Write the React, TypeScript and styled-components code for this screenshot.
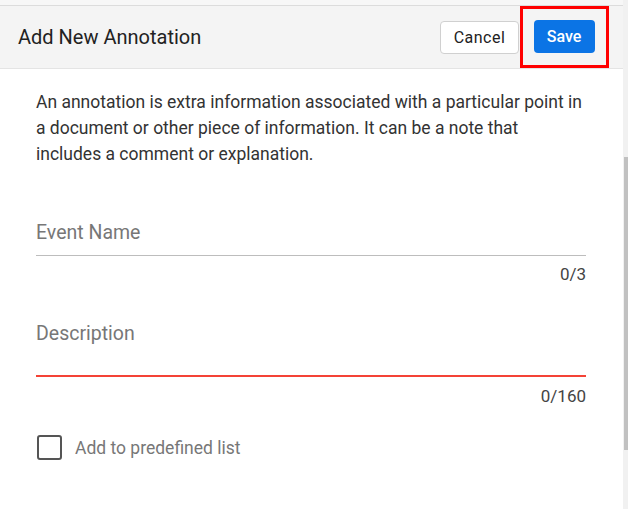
import styled, { createGlobalStyle } from 'styled-components';

const GlobalStyle = createGlobalStyle`
  html, body {
    margin: 0;
    padding: 0;
    background: #fff;
    font-family: Roboto, "Liberation Sans", sans-serif;
  }
`;

const App = () => {
  return (
    <>
      <GlobalStyle />
      <Page>
        <Main>
          <TopStrip />
          <Header>
            <Title>Add New Annotation</Title>
            <Actions>
              <CancelButton type="button">Cancel</CancelButton>
              <SaveFrame>
                <SaveButton type="button">Save</SaveButton>
              </SaveFrame>
            </Actions>
          </Header>
          <Body>
            <Intro>
              An annotation is extra information associated with a particular point in a
              document or other piece of information. It can be a note that includes a
              comment or explanation.
            </Intro>
            <Field>
              <Input placeholder="Event Name" />
              <Counter $gap={8}>0/3</Counter>
            </Field>
            <Field $error>
              <TextArea placeholder="Description" rows={1} />
              <Counter $gap={9}>0/160</Counter>
            </Field>
            <CheckRow>
              <Box type="checkbox" />
              <span>Add to predefined list</span>
            </CheckRow>
          </Body>
        </Main>
        <Track>
          <Thumb />
        </Track>
      </Page>
    </>
  );
};

const Page = styled.div`
  display: flex;
  width: 628px;
  height: 509px;
  overflow: hidden;
`;

const Main = styled.div`
  flex: 1;
  display: flex;
  flex-direction: column;
`;

const TopStrip = styled.div`
  height: 5px;
  background: #f7f7f7;
  border-bottom: 1px solid #dcdcdc;
`;

const Header = styled.div`
  display: flex;
  align-items: center;
  justify-content: space-between;
  height: 62px;
  padding: 0 14px 0 18px;
  background: #f4f4f4;
  border-bottom: 1px solid #e4e4e4;
`;

const Title = styled.h1`
  margin: 0;
  font-size: 20px;
  font-weight: 400;
  color: #222;
`;

const Actions = styled.div`
  display: flex;
  align-items: center;
`;

const CancelButton = styled.button`
  width: 79px;
  height: 33px;
  border: 1px solid #d0d0d0;
  border-radius: 4px;
  background: #fff;
  font-family: inherit;
  font-size: 16px;
  letter-spacing: 0.5px;
  color: #222;
`;

const SaveFrame = styled.div`
  display: flex;
  align-items: center;
  justify-content: center;
  width: 89px;
  height: 62px;
  margin-left: 1px;
  margin-bottom: 1px;
  box-sizing: border-box;
  border: 3px solid #f00;
  padding-right: 1px;
`;

const SaveButton = styled.button`
  width: 61px;
  height: 33px;
  border: none;
  border-radius: 4px;
  background: #0b74e5;
  font-family: inherit;
  font-size: 16px;
  font-weight: 500;
  color: #fff;
`;

const Body = styled.div`
  flex: 1;
  padding: 20px 37px 0 36px;
`;

const Intro = styled.p`
  margin: 0;
  font-size: 17.5px;
  line-height: 26px;
  color: #333;
`;

const Field = styled.div<{ $error?: boolean }>`
  display: flex;
  flex-direction: column;
  margin-top: ${(p) => (p.$error ? '26px' : '50px')};

  & > input,
  & > textarea {
    border-bottom: ${(p) => (p.$error ? '2px solid #f44336' : '1px solid #bdbdbd')};
  }
`;

const Input = styled.input`
  height: 30px;
  padding: 0 0 8px;
  border: none;
  outline: none;
  font-family: inherit;
  font-size: 19.5px;
  color: #222;

  &::placeholder {
    color: #777;
  }
`;

const TextArea = styled.textarea`
  height: 67px;
  box-sizing: border-box;
  padding: 12px 0 0;
  border: none;
  outline: none;
  resize: none;
  font-family: inherit;
  font-size: 19.5px;
  line-height: 23px;
  color: #222;

  &::placeholder {
    color: #777;
  }
`;

const Counter = styled.span<{ $gap: number }>`
  align-self: flex-end;
  margin-top: ${(p) => p.$gap}px;
  font-size: 17px;
  line-height: 20px;
  color: #444;
`;

const CheckRow = styled.label`
  display: flex;
  align-items: center;
  gap: 13px;
  margin-top: 29px;
  font-size: 17.5px;
  color: #777;
`;

const Box = styled.input`
  appearance: none;
  width: 25px;
  height: 25px;
  margin: 0 0 0 1px;
  border: 2px solid #555;
  border-radius: 3px;
  background: #fff;
`;

const Track = styled.div`
  width: 5px;
  padding-top: 157px;
  background: #f1f1f1;
`;

const Thumb = styled.div`
  width: 4px;
  height: 293px;
  margin-left: 1px;
  background: #c1c1c1;
`;

export default App;
